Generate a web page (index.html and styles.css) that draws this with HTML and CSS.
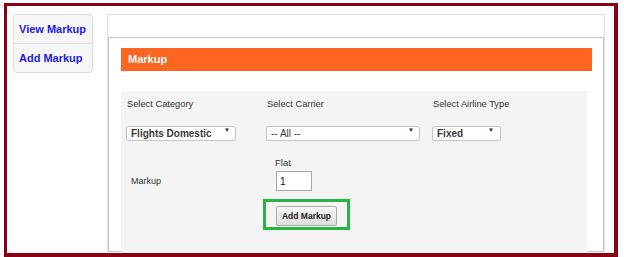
FILE: index.html
```html
<!DOCTYPE html>
<html lang="en">
<head>
    <meta charset="UTF-8">
    <title>Markup</title>
    <link rel="stylesheet" href="styles.css">
</head>
<body>

<div class="frame">
    <ul class="side-nav">
        <li><a href="#">View Markup</a></li>
        <li><a href="#">Add Markup</a></li>
    </ul>

    <div class="panel">
        <div class="panel-body">
            <div class="panel-title">Markup</div>

            <form class="markup-form">
                <div class="field-grid">
                    <label for="category">Select Category</label>
                    <label for="carrier">Select Carrier</label>
                    <label for="airline-type">Select Airline Type</label>

                    <div class="select-box cat">
                        <select id="category" name="category">
                            <option>Flights Domestic</option>
                        </select>
                    </div>
                    <div class="select-box carrier">
                        <select id="carrier" name="carrier">
                            <option>-- All --</option>
                        </select>
                    </div>
                    <div class="select-box type">
                        <select id="airline-type" name="airline-type">
                            <option>Fixed</option>
                        </select>
                    </div>
                </div>

                <div class="markup-row">
                    <span class="row-label">Markup</span>
                    <div class="flat-group">
                        <label for="flat">Flat</label>
                        <input type="text" id="flat" name="flat" value="1">
                    </div>
                </div>

                <div class="submit-row">
                    <div class="highlight">
                        <button type="submit">Add Markup</button>
                    </div>
                </div>
            </form>
        </div>
    </div>
</div>

</body>
</html>
```

FILE: styles.css
```css
body {
    margin: 0;
    font-family: "Liberation Sans", Arial, sans-serif;
    background-color: #ffffff;
}
.frame {
    display: flex;
    align-items: flex-start;
    margin: 3px 0 0 4px;
    width: 607px;
    height: 247px;
    border-style: solid;
    border-color: #8a0014;
    border-width: 3px 4px 4px 3px;
}
.side-nav {
    list-style: none;
    margin: 8px 0 0 6px;
    padding: 0;
    width: 78px;
    background-color: #f6f6f6;
    border: 1px solid #dcdcdc;
    border-radius: 4px;
}
.side-nav li {
    height: 28px;
    display: flex;
    align-items: center;
}
.side-nav li + li {
    border-top: 1px solid #dddddd;
}
.side-nav a {
    padding-left: 5px;
    font-size: 11px;
    font-weight: bold;
    color: #1c1ce0;
    text-decoration: none;
}
.panel {
    margin: 8px 0 0 14px;
    width: 498px;
    height: 238px;
    border: 1px solid #e0e0e0;
    border-bottom: none;
    padding-top: 22px;
    box-sizing: border-box;
}
.panel-body {
    height: 215px;
    border: 1px solid #c8c8c8;
    border-top-color: #cccccc;
    padding: 10px 11px 0 12px;
    box-sizing: border-box;
}
.panel-title {
    height: 23px;
    line-height: 23px;
    background-color: #fd6520;
    color: #ffffff;
    font-size: 11px;
    font-weight: bold;
    padding-left: 7px;
}
.markup-form {
    margin: 20px 5px 0 0;
    height: 161px;
    background-color: #f4f4f4;
    padding: 7px 0 0 5px;
    box-sizing: border-box;
}
.field-grid {
    display: grid;
    grid-template-columns: 140px 166px auto;
    row-gap: 13px;
}
.field-grid label {
    font-size: 9.3px;
    line-height: 12px;
    color: #333333;
    padding-left: 1px;
}
.select-box {
    position: relative;
    height: 15px;
}
.select-box select {
    appearance: none;
    -webkit-appearance: none;
    height: 15px;
    margin: 0;
    padding: 0 0 0 4px;
    border: 1px solid #c6c6c6;
    border-radius: 2px;
    background-color: #ffffff;
    font-family: "Liberation Sans", Arial, sans-serif;
    font-size: 10px;
    font-weight: bold;
    color: #3a3a3a;
}
.select-box::after {
    content: "\25BC";
    position: absolute;
    top: 4px;
    font-size: 6px;
    color: #222222;
}
.select-box.cat select { width: 110px; }
.select-box.cat::after { left: 98px; }
.select-box.carrier select { width: 154px; font-weight: normal; }
.select-box.carrier::after { left: 142px; }
.select-box.type select { width: 69px; }
.select-box.type::after { left: 56px; }
.markup-row {
    display: flex;
    align-items: flex-end;
    margin-top: 19px;
}
.row-label {
    width: 144px;
    padding-left: 5px;
    margin-bottom: 5px;
    font-size: 9px;
    color: #333333;
}
.flat-group {
    display: flex;
    flex-direction: column;
}
.flat-group label {
    font-size: 9.5px;
    line-height: 12px;
    color: #333333;
    margin-bottom: 2px;
}
.flat-group input {
    width: 36px;
    height: 20px;
    margin: 0 0 0 1px;
    padding: 0 0 0 3px;
    border: 1px solid #a8a8a8;
    box-sizing: border-box;
    font-family: "Liberation Sans", Arial, sans-serif;
    font-size: 10px;
    color: #111111;
}
.submit-row {
    margin: 8px 0 0 137px;
}
.highlight {
    width: 87px;
    height: 31px;
    border: 3px solid #26b443;
    box-sizing: border-box;
    padding: 3px 0 0 10px;
}
.highlight button {
    width: 61px;
    height: 20px;
    padding: 0;
    border: 1px solid #a9a9a9;
    border-radius: 2px;
    background: linear-gradient(#f6f6f6, #dedede);
    font-family: "Liberation Sans", Arial, sans-serif;
    font-size: 8.5px;
    font-weight: bold;
    color: #1e1e1e;
    cursor: pointer;
}
```
